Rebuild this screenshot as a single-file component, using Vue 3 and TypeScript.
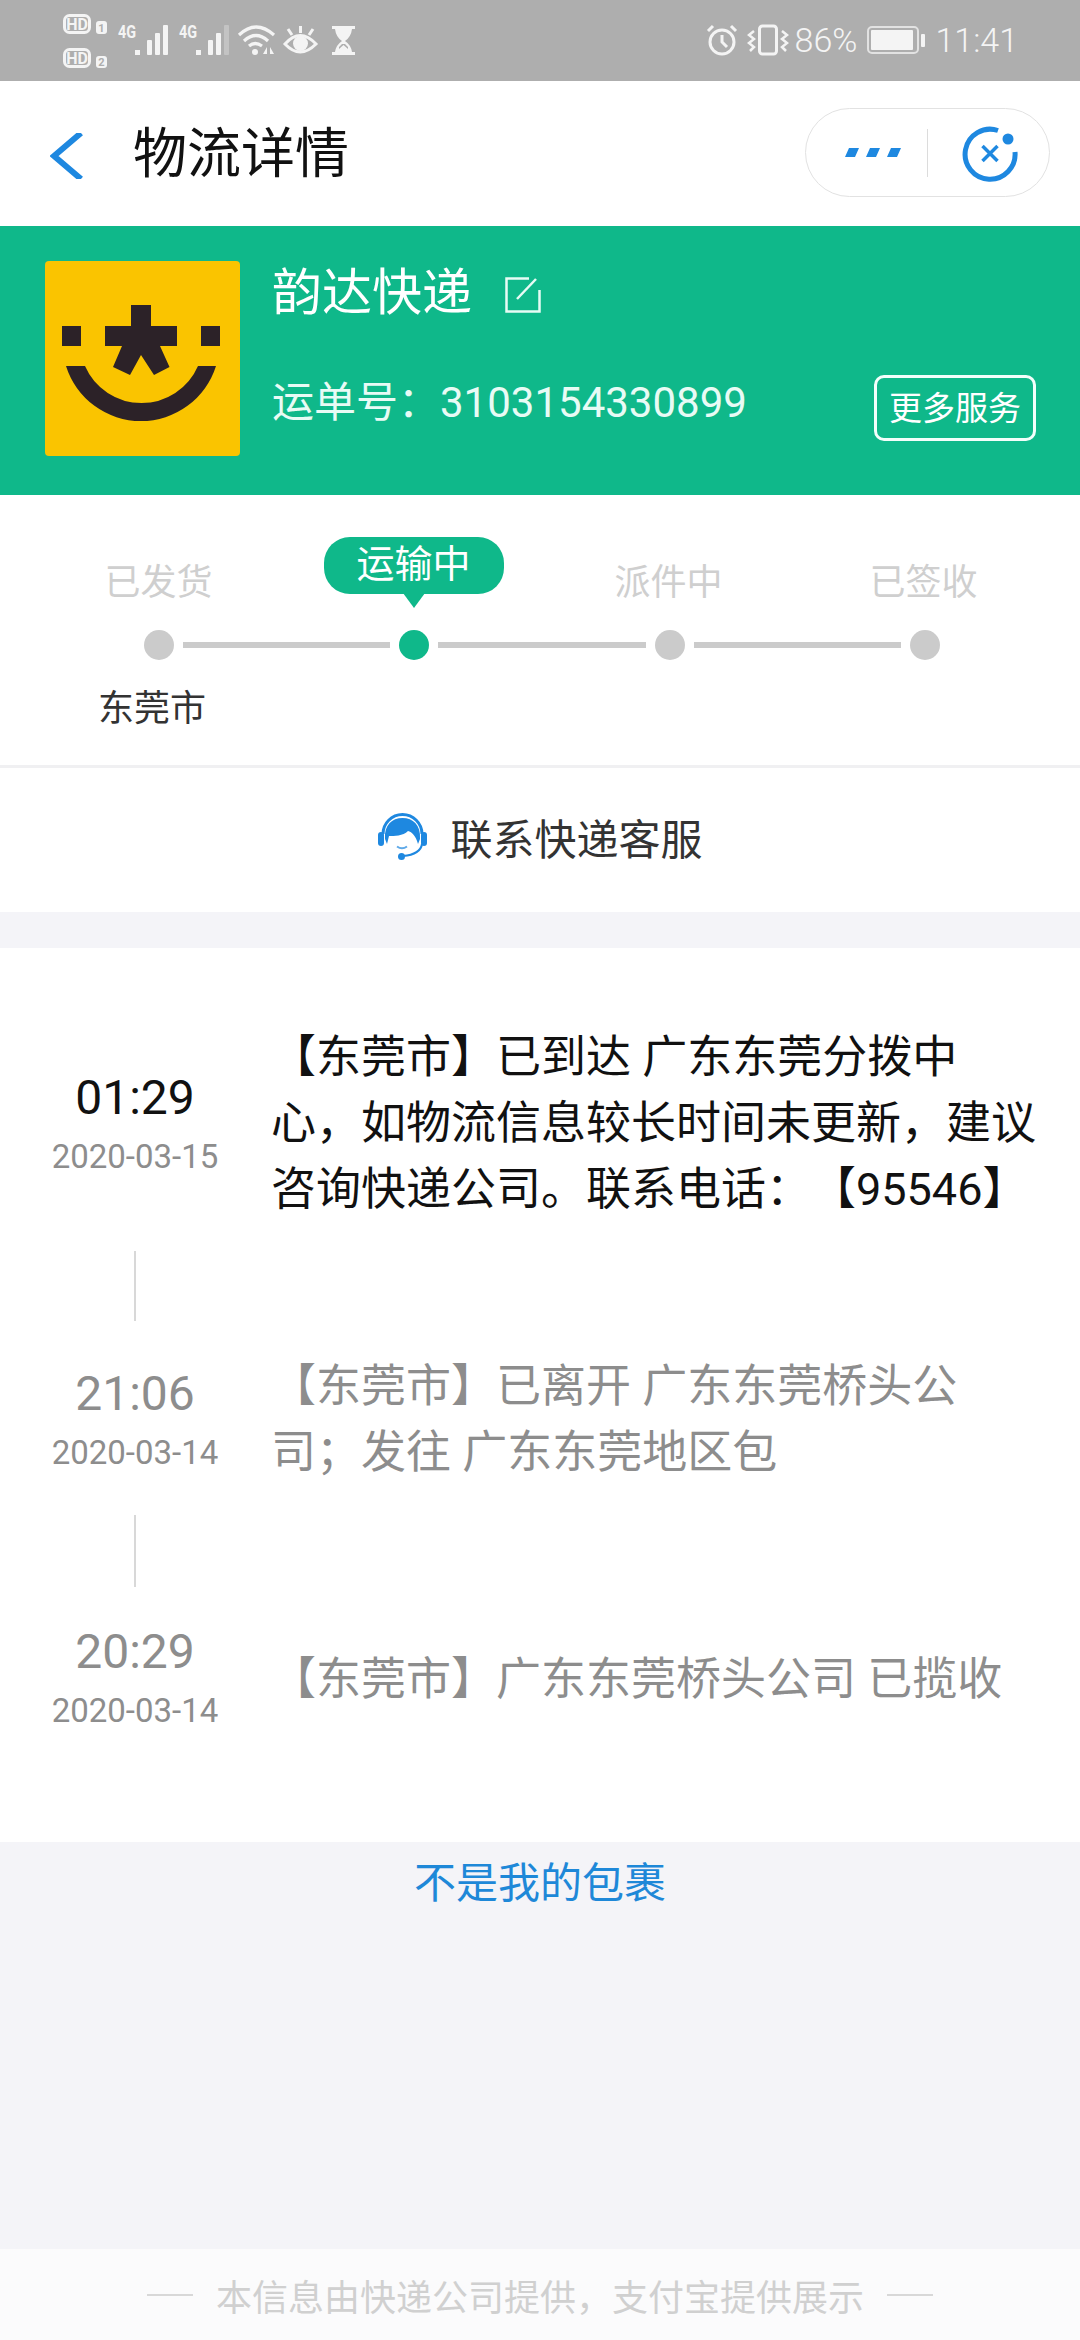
<script setup lang="ts">
interface Step {
  label: string
  active?: boolean
}

interface TraceItem {
  time: string
  date: string
  text: string
  latest?: boolean
}

const steps: Step[] = [
  { label: '已发货' },
  { label: '运输中', active: true },
  { label: '派件中' },
  { label: '已签收' }
]

const traces: TraceItem[] = [
  {
    time: '01:29',
    date: '2020-03-15',
    text: '【东莞市】已到达 广东东莞分拨中心，如物流信息较长时间未更新，建议咨询快递公司。联系电话：【95546】',
    latest: true
  },
  {
    time: '21:06',
    date: '2020-03-14',
    text: '【东莞市】已离开 广东东莞桥头公司；发往 广东东莞地区包'
  },
  {
    time: '20:29',
    date: '2020-03-14',
    text: '【东莞市】广东东莞桥头公司 已揽收'
  }
]

// signal bars for the two sim cards, x offset and whether the last bar is dimmed
const signalGroups = [
  { x: 0, weak: false },
  { x: 61, weak: true }
]
</script>

<template>
  <div class="page">
    <header class="status-bar">
      <svg class="status-left" width="300" height="81" viewBox="60 0 300 81" fill="#f4f4f4">
        <g fill="none" stroke="#f4f4f4" stroke-width="3">
          <rect x="64.500" y="15.500" width="25" height="17" rx="5" />
          <rect x="64.500" y="49.500" width="25" height="17" rx="5" />
        </g>
        <text class="hd" x="77" y="30">HD</text>
        <text class="hd" x="77" y="64">HD</text>
        <rect x="96" y="21" width="11" height="13" rx="3" />
        <rect x="96" y="56" width="11" height="12" rx="3" />
        <text class="sim" x="101.500" y="32">1</text>
        <text class="sim" x="101.500" y="66">2</text>
        <g v-for="group in signalGroups" :key="group.x" :transform="`translate(${group.x} 0)`">
          <text class="net" transform="translate(118 38) scale(0.8 1)">4G</text>
          <rect x="135" y="50" width="5" height="5" />
          <rect x="147" y="40" width="5" height="15" rx="1" />
          <rect x="155" y="33" width="5" height="22" rx="1" />
          <rect x="163" y="25" width="5" height="30" rx="1" :opacity="group.weak ? 0.3 : 1" />
        </g>
        <g fill="none" stroke="#f4f4f4" stroke-width="3.200">
          <path d="M239 35 Q256 19 274 35" />
          <path d="M244 41 Q256 30 268 41" />
          <path d="M249 46 Q255 41 262 46" />
        </g>
        <circle cx="255" cy="52" r="3" />
        <path d="M266 47 L266 54 L262 54 Z M269 47 L269 54 L273 54 Z" transform="translate(1 0)" />
        <path d="M285 44 Q300 27 316 44 Q300 60 285 44 Z" fill="none" stroke="#f4f4f4" stroke-width="3" />
        <circle cx="300.500" cy="43.500" r="7.500" />
        <path d="M300.500 26 V33 M288 29 L292 35 M313 29 L309 35" stroke="#f4f4f4" stroke-width="3" />
        <path d="M332 26 H355 V29 H352 Q351 37 345 41 Q351 45 352 52 H355 V55 H332 V52 H335 Q336 45 342 41 Q336 37 335 29 H332 Z" />
        <path d="M342 44 L339 47 L339 49 L343.500 45 L348 49 L348 47 L345 44 Z" fill="#aeaeae" />
      </svg>
      <div class="status-right">
        <svg width="32" height="32" viewBox="0 0 32 32" fill="none" stroke="#f4f4f4" stroke-width="3">
          <circle cx="16" cy="18" r="12" />
          <path d="M16 11 V18 L21 23 M2 7 L7 2 M30 7 L25 2" />
        </svg>
        <svg class="vibrate" width="42" height="32" viewBox="0 0 42 32" fill="none" stroke="#f4f4f4" stroke-width="2.500">
          <rect x="12.500" y="2" width="17" height="28" rx="3" stroke-width="3" />
          <path d="M7 7 L2 11 L7 15 L2 19 L7 23 L3 27" />
          <path d="M35 7 L40 11 L35 15 L40 19 L35 23 L39 27" />
        </svg>
        <span class="battery-pct">86%</span>
        <svg class="battery" width="58" height="28" viewBox="0 0 58 28">
          <rect x="1" y="1" width="50" height="26" rx="4" fill="none" stroke="#e2e2e2" stroke-width="2" />
          <rect x="4" y="4" width="42" height="20" rx="1" fill="#f4f4f4" />
          <rect x="54" y="8" width="4" height="13" rx="1" fill="#f4f4f4" />
        </svg>
        <span class="clock">11:41</span>
      </div>
    </header>

    <nav class="nav">
      <svg class="back" width="33" height="46" viewBox="0 0 33 46" fill="none" stroke="#1e88e0" stroke-width="6">
        <path d="M31 0 L4 23 L31 46" />
      </svg>
      <h1 class="title">物流详情</h1>
      <div class="capsule">
        <svg width="56" height="10" viewBox="0 0 56 10" fill="#1e88e0">
          <path d="M4 0 H14 L10 9 H0 Z M25 0 H35 L31 9 H21 Z M46 0 H56 L52 9 H42 Z" />
        </svg>
        <span class="capsule-sep"></span>
        <svg width="56" height="56" viewBox="0 0 56 56" fill="none" stroke="#1e88e0" stroke-width="5">
          <path d="M36 4.500 A25 25 0 1 0 53 26" />
          <circle cx="46" cy="13" r="5.500" fill="#1e88e0" stroke="none" />
          <path d="M20.500 20 L35.500 35 M35.500 20 L20.500 35" stroke-width="3.500" />
        </svg>
      </div>
    </nav>

    <section class="company">
      <svg class="logo" width="195" height="195" viewBox="0 0 195 195">
        <rect width="195" height="195" rx="4" fill="#fac400" />
        <g fill="#2c2228">
          <rect x="17" y="65" width="19" height="20" />
          <rect x="156" y="65" width="19" height="20" />
          <rect x="86" y="44" width="20" height="41" />
          <rect x="60" y="65" width="72" height="20" />
          <path d="M77 85 L68 106 L85 114 L96 94 L109 114 L124.500 106 L115 85 Z" />
          <path d="M21 105 A78.600 78.600 0 0 0 171 105 H153 A61.600 61.600 0 0 1 40 105 Z" />
        </g>
      </svg>
      <div class="company-info">
        <div class="company-name">
          <span>韵达快递</span>
          <svg width="36" height="36" viewBox="0 0 36 36" fill="none" stroke="#e8fbf5" stroke-width="2.500">
            <path d="M24 1.500 H1.500 V34.500 H34.500 V13" />
            <path d="M12 22 L31 2" />
          </svg>
        </div>
        <div class="waybill-row">
          <span class="waybill">运单号：3103154330899</span>
          <span class="more-btn">更多服务</span>
        </div>
      </div>
    </section>

    <section class="progress">
      <div class="step-labels">
        <div v-for="step in steps" :key="step.label" class="step-cell">
          <span v-if="step.active" class="step-pill">{{ step.label }}</span>
          <span v-else class="step-label">{{ step.label }}</span>
        </div>
      </div>
      <div class="track">
        <template v-for="(step, i) in steps" :key="step.label">
          <span class="dot" :class="{ 'dot--active': step.active }"></span>
          <span v-if="i < steps.length - 1" class="track-line"></span>
        </template>
      </div>
      <div class="city">东莞市</div>
    </section>

    <section class="contact">
      <svg class="contact-icon" width="49" height="49" viewBox="0 0 49 49">
        <path d="M5 22 A19.500 19.500 0 0 1 44 22" fill="none" stroke="#1e88e0" stroke-width="3" />
        <rect x="0" y="20" width="6" height="14" rx="3" fill="#1e88e0" />
        <rect x="43" y="20" width="6" height="14" rx="3" fill="#1e88e0" />
        <path d="M7 27 C6 13 14 6 24.500 6 C35 6 43 13 42 27 L40 32 C38 24 34 20 30 19 C25 24 16 24 11 24 L9 32 Z" fill="#1e88e0" />
        <path d="M19 34.500 Q24 38 29 34.500" fill="none" stroke="#5ea9e8" stroke-width="2" />
        <path d="M44 32 C43 39 36 43 25 44" fill="none" stroke="#1e88e0" stroke-width="2" />
        <circle cx="23.500" cy="44.500" r="3.500" fill="#1e88e0" />
      </svg>
      <span>联系快递客服</span>
    </section>

    <div class="band"></div>

    <section class="traces">
      <template v-for="(item, i) in traces" :key="item.time">
        <div v-if="i > 0" class="connector" :class="{ 'connector--last': i === traces.length - 1 }"></div>
        <div class="trace" :class="{ 'trace--latest': item.latest }">
          <div class="trace-when">
            <div class="trace-time">{{ item.time }}</div>
            <div class="trace-date">{{ item.date }}</div>
          </div>
          <p class="trace-text">{{ item.text }}</p>
        </div>
      </template>
    </section>

    <section class="not-mine">
      <span>不是我的包裹</span>
    </section>

    <footer class="foot">
      <span class="foot-dash"></span>
      <span>本信息由快递公司提供，支付宝提供展示</span>
      <span class="foot-dash"></span>
    </footer>
  </div>
</template>

<style scoped>
.page {
  width: 1080px;
  height: 2340px;
  overflow: hidden;
  background: #f4f4f8;
  font-family: Roboto, "Noto Sans CJK SC", sans-serif;
  text-spacing-trim: space-all;
  color: #111;
}

.status-bar {
  height: 81px;
  background: #aeaeae;
  display: flex;
  justify-content: space-between;
  padding: 0 62px 0 60px;
}

.status-left {
  display: block;
}

.hd {
  font-size: 16px;
  font-weight: 700;
  text-anchor: middle;
  fill: #f4f4f4;
}

.sim {
  font-size: 11px;
  font-weight: 700;
  text-anchor: middle;
  fill: #aeaeae;
}

.net {
  font-size: 18px;
  font-weight: 700;
  fill: #f4f4f4;
}

.status-right {
  display: flex;
  align-items: center;
  color: #f4f4f4;
  padding-bottom: 1px;
}

.vibrate {
  margin-left: 9px;
}

.battery-pct {
  font-size: 34px;
  margin-left: 6px;
  font-weight: 300;
}

.battery {
  margin-left: 10px;
}

.clock {
  font-size: 34px;
  margin-left: 10px;
  font-weight: 300;
}

.nav {
  height: 145px;
  background: #fff;
  display: flex;
  align-items: center;
  padding: 0 30px 0 50px;
}

.back {
  margin-top: 4px;
}

.title {
  margin: 2px 0 0 50px;
  font-size: 54px;
  line-height: 70px;
  font-weight: 400;
  color: #111;
  flex: 1;
}

.capsule {
  width: 245px;
  height: 89px;
  box-sizing: border-box;
  margin-bottom: 2px;
  border: 1px solid #e2e2e2;
  border-radius: 45px;
  display: flex;
  align-items: center;
  padding-left: 39px;
}

.capsule-sep {
  width: 1px;
  height: 48px;
  background: #dcdcdc;
  margin: 0 26px;
}

.capsule svg:last-child {
  margin-left: 8px;
  margin-top: 2px;
}

.company {
  height: 269px;
  box-sizing: border-box;
  background: #0fb88a;
  display: flex;
  padding: 35px 45px 0;
  color: #fff;
}

.logo {
  flex: none;
}

.company-info {
  flex: 1;
  margin-left: 32px;
}

.company-name {
  height: 54px;
  display: flex;
  align-items: center;
  font-size: 50px;
  gap: 33px;
}

.company-name svg {
  margin-top: 14px;
}

.waybill-row {
  margin-top: 60px;
  height: 66px;
  display: flex;
  align-items: center;
  justify-content: space-between;
}

.waybill {
  font-size: 42px;
  padding-bottom: 20px;
  color: #e8fbf5;
}

.more-btn {
  width: 162px;
  height: 66px;
  box-sizing: border-box;
  border: 3px solid #f2fffb;
  border-radius: 10px;
  margin-right: -1px;
  padding-bottom: 5px;
  display: flex;
  align-items: center;
  justify-content: center;
  font-size: 33px;
}

.progress {
  height: 273px;
  box-sizing: border-box;
  background: #fff;
  border-bottom: 3px solid #f0f0f2;
  padding-top: 42px;
}

.step-labels {
  display: grid;
  grid-template-columns: repeat(4, 1fr);
  height: 65px;
  padding: 0 29px 0 31px;
}

.step-cell {
  display: flex;
  flex-direction: column;
  align-items: center;
}

.step-label {
  margin-top: 26px;
  font-size: 36px;
  line-height: 40px;
  color: #cfcfcf;
}

.step-pill {
  position: relative;
  width: 180px;
  height: 57px;
  border-radius: 26px;
  background: #0fb88a;
  color: #fff;
  font-size: 38px;
  line-height: 54px;
  text-align: center;
}

.step-pill::after {
  content: '';
  position: absolute;
  left: 50%;
  top: 56px;
  margin-left: -11px;
  border-left: 11px solid transparent;
  border-right: 11px solid transparent;
  border-top: 15px solid #0fb88a;
}

.track {
  margin-top: 28px;
  display: flex;
  align-items: center;
  padding: 0 140px 0 144px;
}

.dot {
  flex: none;
  width: 30px;
  height: 30px;
  border-radius: 50%;
  background: #cbcbcb;
}

.dot--active {
  background: #0fb88a;
}

.track-line {
  flex: 1;
  height: 6px;
  margin: 0 9px;
  background: #cbcbcb;
}

.city {
  margin-top: 25px;
  padding-left: 98px;
  font-size: 36px;
  line-height: 48px;
  color: #333;
}

.contact {
  height: 144px;
  box-sizing: border-box;
  padding-bottom: 8px;
  background: #fff;
  display: flex;
  align-items: center;
  justify-content: center;
  gap: 23px;
  font-size: 42px;
  color: #333;
}

.contact-icon {
  margin-left: 1px;
}

.band {
  height: 36px;
}

.traces {
  height: 894px;
  box-sizing: border-box;
  background: #fff;
  padding-top: 77px;
  display: flex;
  flex-direction: column;
}

.trace {
  display: flex;
  align-items: center;
  min-height: 132px;
  color: #8d8d8d;
}

.trace-when {
  width: 270px;
  flex: none;
  text-align: center;
  padding-top: 3px;
}

.trace:last-child .trace-when {
  padding-top: 0;
}

.trace-time {
  font-size: 48px;
  line-height: 62px;
}

.trace--latest .trace-time {
  color: #111;
}

.trace-date {
  font-size: 33px;
  line-height: 56px;
  color: #8d8d8d;
}

.trace-text {
  margin: 0 0 0 1px;
  width: 768px;
  flex: none;
  font-size: 45px;
  line-height: 66px;
}

.trace--latest .trace-text {
  color: #111;
}

.connector {
  width: 2px;
  height: 70px;
  margin: 28px 0 33px 134px;
  background: #d8d8d8;
  flex: none;
}

.connector--last {
  height: 72px;
  margin: 29px 0 27px 134px;
}

.not-mine {
  height: 407px;
  box-sizing: border-box;
  padding-top: 18px;
  text-align: center;
  font-size: 42px;
  line-height: 48px;
  color: #1e88d8;
}

.foot {
  height: 91px;
  background: #fbfbfc;
  display: flex;
  align-items: center;
  justify-content: center;
  gap: 23px;
  font-size: 36px;
  color: #d0d0d0;
}

.foot-dash {
  width: 46px;
  height: 2px;
  background: #d8d8d8;
}
</style>

<style>
html,
body {
  margin: 0;
  background: #f4f4f8;
}
</style>
